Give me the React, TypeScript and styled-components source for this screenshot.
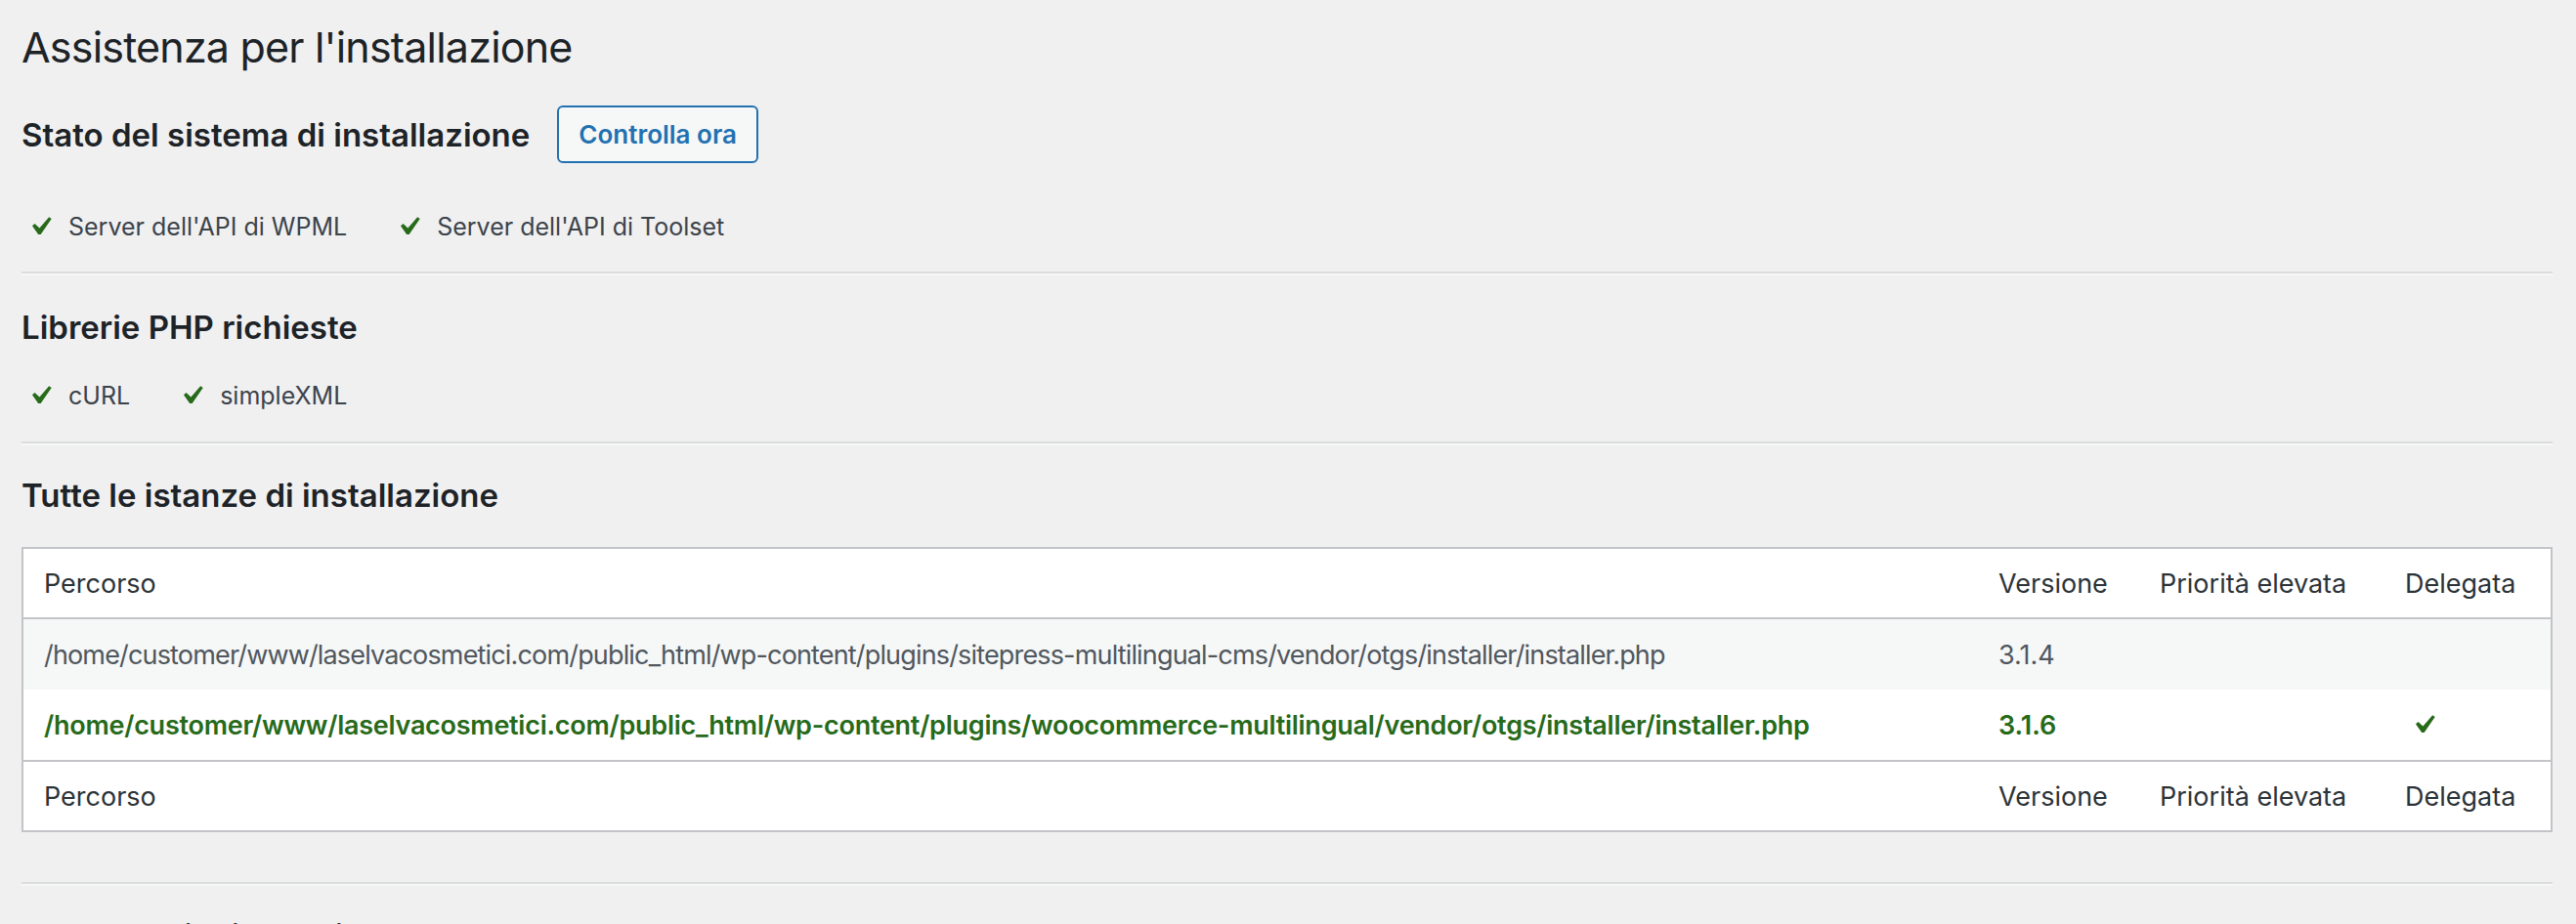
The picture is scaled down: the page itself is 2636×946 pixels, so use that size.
import React from "react";
import styled, { createGlobalStyle } from "styled-components";

const GlobalStyle = createGlobalStyle`
  html, body {
    margin: 0;
    padding: 0;
    background: #f0f0f1;
  }
  body {
    font-family: Inter, "Noto Sans", "Liberation Sans", sans-serif;
    color: #3c434a;
  }
`;

const GREEN = "#276a1a";

const Page = styled.div`
  padding: 0 24px 0 22px;
`;

const Title = styled.h1`
  margin: 20px 0 0;
  font-size: 43px;
  line-height: 56px;
  font-weight: 400;
  letter-spacing: -0.8px;
  color: #1d2327;
`;

const HeadRow = styled.div`
  display: flex;
  align-items: center;
  gap: 28px;
  height: 59px;
  margin-top: 32px;
`;

const SectionTitle = styled.h2<{ $top?: number }>`
  margin: ${(p) => p.$top ?? 0}px 0 0;
  font-size: 33px;
  line-height: 40px;
  font-weight: 600;
  color: #1d2327;
`;

const CheckButton = styled.button`
  height: 59px;
  padding: 0 20px;
  border: 2px solid #2271b1;
  border-radius: 6px;
  background: #f6f7f7;
  color: #2271b1;
  font-family: inherit;
  font-size: 26px;
  font-weight: 600;
  cursor: pointer;
`;

const CheckList = styled.ul<{ $top: number }>`
  display: flex;
  gap: 44px;
  list-style: none;
  margin: ${(p) => p.$top}px 0 0;
  padding: 0;
`;

const CheckItem = styled.li`
  display: flex;
  align-items: center;
  gap: 10px;
  height: 38px;
  font-size: 25px;
  line-height: 36px;
  color: #3c434a;
`;

const Divider = styled.hr<{ $top: number }>`
  height: 0;
  margin: ${(p) => p.$top}px 0 0;
  border: 0;
  border-top: 2px solid #dcdcde;
  border-bottom: 2px solid #f6f7f7;
`;

const Table = styled.table`
  width: 100%;
  margin-top: 33px;
  border-spacing: 0;
  border: 2px solid #c3c4c7;
  background: #fff;
  table-layout: fixed;
  font-size: 27px;
`;

const HeadCell = styled.th<{ $foot?: boolean }>`
  height: 70px;
  padding: 0 21px;
  text-align: left;
  font-weight: 400;
  color: #2c3338;
  vertical-align: middle;
  ${(p) =>
    p.$foot
      ? "border-top: 2px solid #c3c4c7;"
      : "border-bottom: 2px solid #c3c4c7;"}
`;

const Row = styled.tr<{ $active?: boolean }>`
  background: ${(p) => (p.$active ? "#fff" : "#f6f7f7")};
`;

const Cell = styled.td<{ $active?: boolean }>`
  height: 72px;
  padding: 0 21px;
  vertical-align: middle;
  white-space: nowrap;
  color: ${(p) => (p.$active ? GREEN : "#50575e")};
  font-weight: ${(p) => (p.$active ? 600 : 400)};
`;

const PathCell = styled(Cell)`
  letter-spacing: ${(p) => (p.$active ? "-0.26px" : "-0.84px")};
`;

const Check = ({ size = 38 }: { size?: number }) => (
  <svg width={size} height={size} viewBox="0 0 20 20" aria-hidden="true">
    <path
      fill={GREEN}
      d="M14.83 4.89l1.34.94-5.81 8.38H9.02L5.78 9.67l1.34-1.25 2.57 2.4z"
    />
  </svg>
);

const CheckWrap = styled.span`
  display: inline-flex;
  vertical-align: middle;
`;

const instances = [
  {
    path: "/home/customer/www/laselvacosmetici.com/public_html/wp-content/plugins/sitepress-multilingual-cms/vendor/otgs/installer/installer.php",
    version: "3.1.4",
    delegated: false,
  },
  {
    path: "/home/customer/www/laselvacosmetici.com/public_html/wp-content/plugins/woocommerce-multilingual/vendor/otgs/installer/installer.php",
    version: "3.1.6",
    delegated: true,
  },
];

const columns = ["Percorso", "Versione", "Priorità elevata", "Delegata"];

const App: React.FC = () => {
  return (
    <Page>
      <GlobalStyle />
      <Title>Assistenza per l'installazione</Title>

      <HeadRow>
        <SectionTitle>Stato del sistema di installazione</SectionTitle>
        <CheckButton>Controlla ora</CheckButton>
      </HeadRow>
      <CheckList $top={46}>
        <CheckItem>
          <Check />
          Server dell'API di WPML
        </CheckItem>
        <CheckItem>
          <Check />
          Server dell'API di Toolset
        </CheckItem>
      </CheckList>
      <Divider $top={27} />

      <SectionTitle $top={33}>Librerie PHP richieste</SectionTitle>
      <CheckList $top={31}>
        <CheckItem>
          <Check />
          cURL
        </CheckItem>
        <CheckItem>
          <Check />
          simpleXML
        </CheckItem>
      </CheckList>
      <Divider $top={28} />

      <SectionTitle $top={31}>Tutte le istanze di installazione</SectionTitle>
      <Table>
        <colgroup>
          <col />
          <col style={{ width: 165 }} />
          <col style={{ width: 251 }} />
          <col style={{ width: 170 }} />
        </colgroup>
        <thead>
          <tr>
            {columns.map((c) => (
              <HeadCell key={c}>{c}</HeadCell>
            ))}
          </tr>
        </thead>
        <tbody>
          {instances.map((i) => (
            <Row key={i.path} $active={i.delegated}>
              <PathCell $active={i.delegated}>{i.path}</PathCell>
              <Cell $active={i.delegated}>{i.version}</Cell>
              <Cell $active={i.delegated} />
              <Cell $active={i.delegated}>
                {i.delegated && (
                  <CheckWrap>
                    <Check />
                  </CheckWrap>
                )}
              </Cell>
            </Row>
          ))}
        </tbody>
        <tfoot>
          <tr>
            {columns.map((c) => (
              <HeadCell key={c} $foot>
                {c}
              </HeadCell>
            ))}
          </tr>
        </tfoot>
      </Table>
      <Divider $top={51} />

      <SectionTitle $top={31}>Log delle richieste di Installer</SectionTitle>
    </Page>
  );
};

export default App;
